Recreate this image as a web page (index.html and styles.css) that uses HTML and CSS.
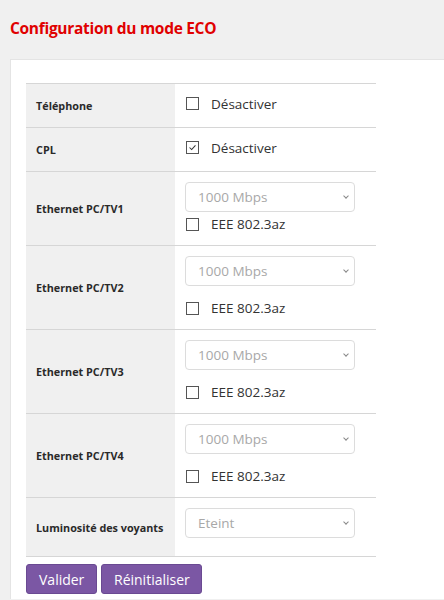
FILE: index.html
```html
<!DOCTYPE html>
<html lang="fr">
<head>
<meta charset="utf-8">
<title>Configuration du mode ECO</title>
<link rel="stylesheet" href="styles.css">
</head>
<body>
<h1 class="title">Configuration du mode ECO</h1>
<div class="panel">
  <table class="eco">
    <tr class="r-short">
      <th>Téléphone</th>
      <td><label class="chk"><span class="box"></span>Désactiver</label></td>
    </tr>
    <tr class="r-short">
      <th>CPL</th>
      <td><label class="chk"><span class="box on"><svg viewBox="0 0 13 13" width="13" height="13"><path d="M3 6.5 L5.5 9 L10 4" fill="none" stroke="#333" stroke-width="1.2"/></svg></span>Désactiver</label></td>
    </tr>
    <tr class="r-eth1">
      <th>Ethernet PC/TV1</th>
      <td>
        <div class="sel"><span>1000 Mbps</span><span class="chev"></span></div>
        <label class="chk tight"><span class="box"></span>EEE 802.3az</label>
      </td>
    </tr>
    <tr class="r-eth">
      <th>Ethernet PC/TV2</th>
      <td>
        <div class="sel"><span>1000 Mbps</span><span class="chev"></span></div>
        <label class="chk wide"><span class="box"></span>EEE 802.3az</label>
      </td>
    </tr>
    <tr class="r-eth">
      <th>Ethernet PC/TV3</th>
      <td>
        <div class="sel"><span>1000 Mbps</span><span class="chev"></span></div>
        <label class="chk wide"><span class="box"></span>EEE 802.3az</label>
      </td>
    </tr>
    <tr class="r-eth">
      <th>Ethernet PC/TV4</th>
      <td>
        <div class="sel"><span>1000 Mbps</span><span class="chev"></span></div>
        <label class="chk wide"><span class="box"></span>EEE 802.3az</label>
      </td>
    </tr>
    <tr class="r-lum">
      <th>Luminosité des voyants</th>
      <td>
        <div class="sel"><span>Eteint</span><span class="chev"></span></div>
      </td>
    </tr>
  </table>
  <div class="actions">
    <button class="btn">Valider</button>
    <button class="btn">Réinitialiser</button>
  </div>
</div>
</body>
</html>
```
FILE: styles.css
```css
html, body {
  margin: 0;
  padding: 0;
  background: #f0f0f0;
  font-family: "Open Sans", "Noto Sans", sans-serif;
  color: #333;
}
.title {
  margin: 0;
  padding: 17px 0 0 10px;
  height: 59px;
  box-sizing: border-box;
  font-size: 15.5px;
  line-height: 22px;
  font-weight: 700;
  color: #e00000;
  letter-spacing: -0.3px;
}
.panel {
  margin-left: 10px;
  background: #fff;
  border-top: 1px solid #e4e4e4;
  border-left: 1px solid #e4e4e4;
  padding: 23px 0 5px 15px;
}
.eco {
  border-collapse: collapse;
  width: 350px;
  border-top: 1px solid #d6d6d6;
}
.eco tr {
  border-bottom: 1px solid #d6d6d6;
}
.eco th {
  background: #f0f0f0;
  width: 149px;
  box-sizing: border-box;
  text-align: left;
  font-size: 10.8px;
  font-weight: 700;
  color: #2a2a2a;
  padding: 0 0 0 10px;
  vertical-align: middle;
}
.eco td {
  padding: 0 0 0 10px;
  vertical-align: top;
}
.r-short { height: 44px; }
.r-short td { vertical-align: middle; }
.r-eth1 { height: 74px; }
.r-eth { height: 84px; }
.r-lum { height: 59px; }
.chk {
  display: flex;
  align-items: center;
  font-size: 13.5px;
  color: #333;
  height: 16px;
}
.r-short .chk { margin-top: -4px; }
.box {
  width: 11px;
  height: 11px;
  border: 1px solid #555;
  margin: 0 12px 0 1px;
  display: inline-flex;
  align-items: center;
  justify-content: center;
  background: #fff;
}
.box.on svg { display: block; }
.tight { margin-top: 4px; }
.wide { margin-top: 14px; }
.sel {
  margin-top: 10px;
  width: 170px;
  height: 30px;
  box-sizing: border-box;
  border: 1px solid #dcdcdc;
  border-radius: 4px;
  display: flex;
  align-items: center;
  justify-content: space-between;
  padding: 0 6px 0 12px;
  font-size: 13.5px;
  color: #a8a8a8;
}
.chev {
  width: 3px;
  height: 3px;
  border-right: 1px solid #888;
  border-bottom: 1px solid #888;
  transform: rotate(45deg);
  margin-bottom: 2px;
}
.actions {
  display: flex;
  gap: 4px;
  margin-top: 7px;
}
.btn {
  background: #7b57a4;
  color: #fff;
  border: 1px solid #6a4a92;
  border-radius: 3px;
  height: 30px;
  padding: 0 12px;
  font-family: "Open Sans", "Noto Sans", sans-serif;
  font-size: 14px;
}
.btn:first-child { width: 71px; }
.btn:last-child { width: 101px; }
```
